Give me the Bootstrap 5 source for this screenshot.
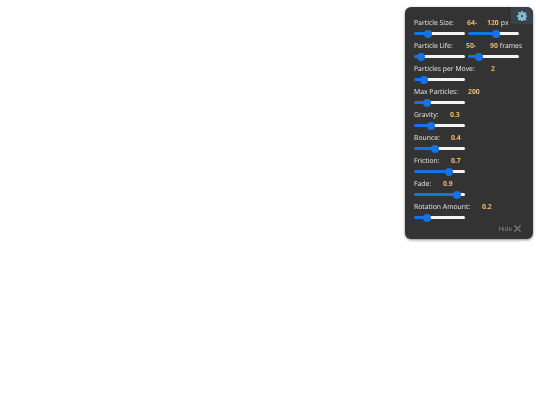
<!DOCTYPE html>
<html lang="en">
<head>
<meta charset="utf-8">
<title>Particle settings</title>
<link href="https://cdn.jsdelivr.net/npm/bootstrap@5.3.0/dist/css/bootstrap.min.css" rel="stylesheet">
<style>
html,body{background:#fff;height:100%;}
body{font-family:"Open Sans","Noto Sans",sans-serif;font-size:6.85px;line-height:10px;position:relative;overflow:hidden;text-rendering:geometricPrecision;}
.fx-panel{position:absolute;left:405px;top:7px;width:128px;height:232px;background:#333;border-radius:6px;box-shadow:0 1px 3px rgba(0,0,0,.45);color:#e6e6e6;padding:11px 9px 0 9px;will-change:transform;}
.gear-tab{position:absolute;right:0;top:0;width:22px;height:17px;background:#3a434a;border-top-right-radius:6px;display:flex;align-items:center;justify-content:center;}
.fx-row{height:23px;}
.fx-head{height:10px;white-space:nowrap;padding-top:1px;}
.fx-val{color:#efb96e;font-weight:700;}
.fx-range{-webkit-appearance:none;appearance:none;display:block;width:51px;height:9px;margin:1px 0 0;padding:0;background:transparent;flex:none;}
.fx-range::-webkit-slider-runnable-track{height:3px;border-radius:2px;background:linear-gradient(to right,#1573e6 calc(4px + var(--p)*.43px),#f4f4f4 calc(4px + var(--p)*.43px));}
.fx-range::-webkit-slider-thumb{-webkit-appearance:none;appearance:none;width:8px;height:8px;margin-top:-2.5px;border-radius:50%;background:#1573e6;border:0;}
.fx-sliders{gap:3px;}
.hide-line{color:#8d8d8d;font-size:6.3px;height:10px;margin-top:-1px;padding-right:3px;gap:2px;}
.hide-x{margin-bottom:1px;}
.lb-29{width:29px}.lb-36{width:36px}.lb-37{width:37px}.lb-52{width:52px}.lb-53{width:53px}.lb-54{width:54px}.lb-68{width:68px}.lb-77{width:77px}
.v-a{width:20px}.v-b{width:24px}
.unit-gap{margin-left:2px}
</style>
</head>
<body>
<div class="fx-panel">
  <div class="gear-tab">
    <svg width="10" height="10" viewBox="0 0 16 16" aria-hidden="true"><path fill="#86bccd" fill-rule="evenodd" d="M6.600 0h2.800l.4 2.200 1.300.6L13 1.500l2 2-1.300 1.900.6 1.300 2.200.4v2.800l-2.200.4-.6 1.300 1.300 1.900-2 2-1.900-1.300-1.300.6-.4 2.200H6.600l-.4-2.200-1.300-.6L3 15l-2-2 1.300-1.900-.6-1.300L0 9.400V6.600l2.200-.4.6-1.300L1.500 3l2-2 1.900 1.300 1.300-.6zM8 6.200a1.800 1.800 0 1 0 0 3.600 1.800 1.800 0 0 0 0-3.600z"/></svg>
  </div>
  <div class="fx-row">
    <div class="fx-head d-flex"><span class="lb-53">Particle Size:</span><span class="fx-val v-a">64-</span><span class="fx-val">120</span><span class="unit-gap">px</span></div>
    <div class="d-flex fx-sliders"><input class="fx-range" type="range" style="--p:23" value="23" aria-label="Particle size min"><input class="fx-range" type="range" style="--p:56" value="56" aria-label="Particle size max"></div>
  </div>
  <div class="fx-row">
    <div class="fx-head d-flex"><span class="lb-52">Particle Life:</span><span class="fx-val v-b">50-</span><span class="fx-val">90</span><span class="unit-gap">frames</span></div>
    <div class="d-flex fx-sliders"><input class="fx-range" type="range" style="--p:8" value="8" aria-label="Particle life min"><input class="fx-range" type="range" style="--p:17" value="17" aria-label="Particle life max"></div>
  </div>
  <div class="fx-row">
    <div class="fx-head d-flex"><span class="lb-77">Particles per Move:</span><span class="fx-val">2</span></div>
    <input class="fx-range" type="range" style="--p:14" value="14" aria-label="Particles per move">
  </div>
  <div class="fx-row">
    <div class="fx-head d-flex"><span class="lb-54">Max Particles:</span><span class="fx-val">200</span></div>
    <input class="fx-range" type="range" style="--p:20" value="20" aria-label="Max particles">
  </div>
  <div class="fx-row">
    <div class="fx-head d-flex"><span class="lb-36">Gravity:</span><span class="fx-val">0.3</span></div>
    <input class="fx-range" type="range" style="--p:30" value="30" aria-label="Gravity">
  </div>
  <div class="fx-row">
    <div class="fx-head d-flex"><span class="lb-37">Bounce:</span><span class="fx-val">0.4</span></div>
    <input class="fx-range" type="range" style="--p:40" value="40" aria-label="Bounce">
  </div>
  <div class="fx-row">
    <div class="fx-head d-flex"><span class="lb-37">Friction:</span><span class="fx-val">0.7</span></div>
    <input class="fx-range" type="range" style="--p:71" value="71" aria-label="Friction">
  </div>
  <div class="fx-row">
    <div class="fx-head d-flex"><span class="lb-29">Fade:</span><span class="fx-val">0.9</span></div>
    <input class="fx-range" type="range" style="--p:90" value="90" aria-label="Fade">
  </div>
  <div class="fx-row">
    <div class="fx-head d-flex"><span class="lb-68">Rotation Amount:</span><span class="fx-val">0.2</span></div>
    <input class="fx-range" type="range" style="--p:20" value="20" aria-label="Rotation amount">
  </div>
  <div class="hide-line d-flex justify-content-end align-items-center"><span>Hide</span>
    <svg class="hide-x" width="7" height="7" viewBox="0 0 8 8" aria-hidden="true"><path d="M.5.5l7 7M7.500.5l-7 7" stroke="#777" stroke-width="1.500" fill="none"/></svg>
  </div>
</div>
<script src="https://cdn.jsdelivr.net/npm/bootstrap@5.3.0/dist/js/bootstrap.bundle.min.js"></script>
</body>
</html>
